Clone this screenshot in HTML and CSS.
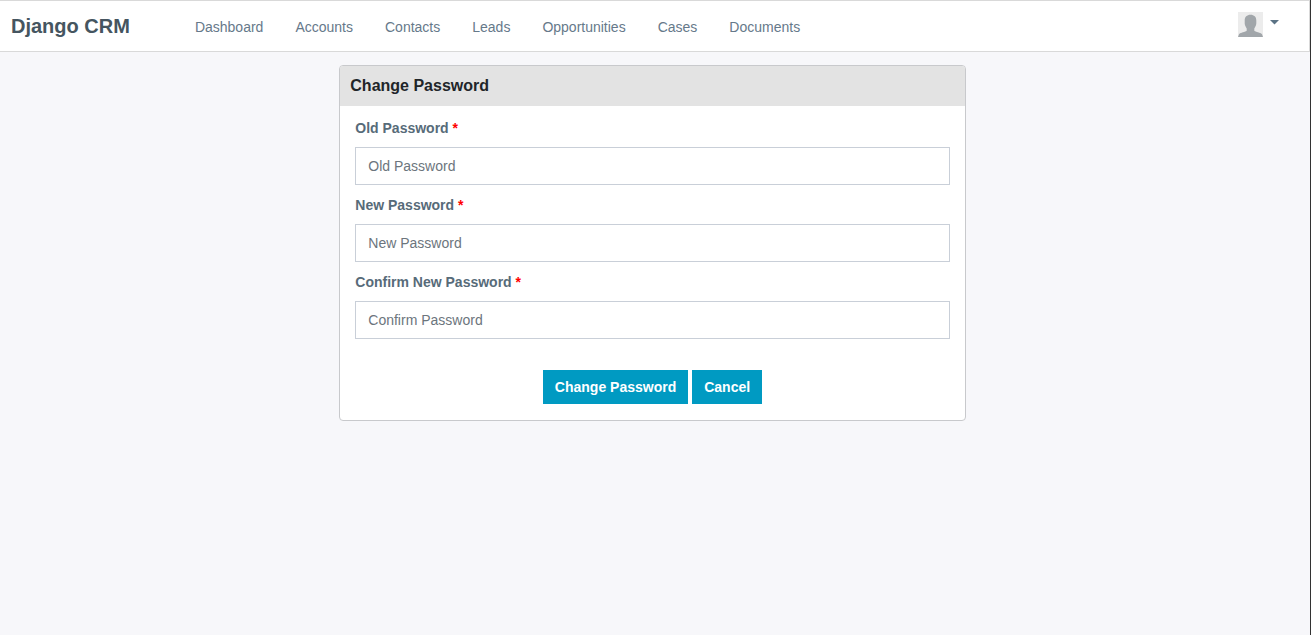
FILE: index.html
```html
<!DOCTYPE html>
<html lang="en">
<head>
<meta charset="utf-8">
<meta name="viewport" content="width=device-width, initial-scale=1">
<title>Change Password - Django CRM</title>
<link rel="stylesheet" href="styles.css">
</head>
<body>
<header class="navbar">
  <a class="brand" href="#">Django CRM</a>
  <nav class="menu">
    <a class="menu-link" href="#">Dashboard</a>
    <a class="menu-link" href="#">Accounts</a>
    <a class="menu-link" href="#">Contacts</a>
    <a class="menu-link" href="#">Leads</a>
    <a class="menu-link" href="#">Opportunities</a>
    <a class="menu-link" href="#">Cases</a>
    <a class="menu-link" href="#">Documents</a>
  </nav>
  <button class="profile" type="button" aria-label="Account menu">
    <svg class="avatar" viewBox="0 0 25 25" aria-hidden="true">
      <rect width="25" height="25" fill="#ececec"/>
      <path fill="#a1a6aa" d="M12.500 2.800C8.900 2.800 6.700 5 6.700 8.500V11.500C6.800 13.800 8 15.200 8.700 16.400V18.800C7.300 20.200 2.600 20.400 1 22.200L0 25H25L24 22.200C22.400 20.400 17.700 20.200 16.300 18.800V16.400C17 15.200 18.200 13.800 18.300 11.500V8.500C18.300 5 16.100 2.800 12.500 2.800Z"/>
    </svg>
    <svg class="caret" viewBox="0 0 9 5" aria-hidden="true"><path fill="#5b7385" d="M0 0H9L4.500 4.500Z"/></svg>
  </button>
</header>
<main class="page">
  <section class="card">
    <h1 class="card-title">Change Password</h1>
    <form class="card-body">
      <div class="field">
        <label class="label" for="old">Old Password <span class="required">*</span></label>
        <input class="input" id="old" type="password" placeholder="Old Password">
      </div>
      <div class="field">
        <label class="label" for="new">New Password <span class="required">*</span></label>
        <input class="input" id="new" type="password" placeholder="New Password">
      </div>
      <div class="field">
        <label class="label" for="confirm">Confirm New Password <span class="required">*</span></label>
        <input class="input" id="confirm" type="password" placeholder="Confirm Password">
      </div>
      <div class="actions">
        <button class="button" type="submit">Change Password</button>
        <a class="button" href="#">Cancel</a>
      </div>
    </form>
  </section>
</main>
</body>
</html>
```
FILE: styles.css
```css
* {
  box-sizing: border-box;
}

body {
  margin: 0;
  min-height: 100vh;
  border-right: 1px solid #333;
  background: #f7f7fa;
  color: #212529;
  font-family: "Liberation Sans", Arial, sans-serif;
  font-size: 14px;
  line-height: 21px;
}

a {
  text-decoration: none;
}

.navbar {
  display: flex;
  align-items: center;
  min-height: 52px;
  padding: 0 30px 0 11px;
  border: 1px solid #d9d9d9;
  border-left: 0;
  background: #fff;
}

.brand {
  color: #455560;
  font-size: 20px;
  font-weight: bold;
  white-space: nowrap;
}

.menu {
  display: flex;
  flex-wrap: wrap;
  gap: 0 32px;
  margin: 2px 0 0 65px;
}

.menu-link {
  color: #66798a;
}

.profile {
  display: flex;
  gap: 7px;
  margin: 0 0 3px auto;
  padding: 0;
  border: 0;
  background: none;
}

.avatar {
  width: 25px;
  height: 25px;
}

.caret {
  width: 9px;
  height: 5px;
  margin-top: 8px;
}

.page {
  padding: 13px 5px 13px 0;
}

.card {
  width: 48%;
  min-width: 300px;
  margin: 0 auto;
  overflow: hidden;
  border: 1px solid #c8c9cc;
  border-radius: 4px;
  background: #fff;
}

.card-title {
  margin: 0;
  padding: 8px 10px;
  background: #e3e3e3;
  font-size: 16px;
  line-height: 24px;
}

.card-body {
  padding: 12px 15px 16px;
}

.field {
  margin-bottom: 10px;
}

.label {
  display: block;
  margin-bottom: 8px;
  color: #576b79;
  font-weight: bold;
}

.required {
  color: #f00;
}

.input {
  display: block;
  width: 100%;
  height: 38px;
  padding: 0 12px;
  border: 1px solid #c9cfd8;
  border-radius: 0;
  background: #fff;
  color: #495057;
  font: inherit;
}

.input::placeholder {
  color: #6c757d;
  opacity: 1;
}

.actions {
  display: flex;
  flex-wrap: wrap;
  justify-content: center;
  gap: 4px;
  padding-top: 21px;
}

.button {
  height: 34px;
  padding: 0 12px;
  border: 0;
  background: #009ac2;
  color: #fff;
  font: inherit;
  font-weight: bold;
  line-height: 34px;
}
```
